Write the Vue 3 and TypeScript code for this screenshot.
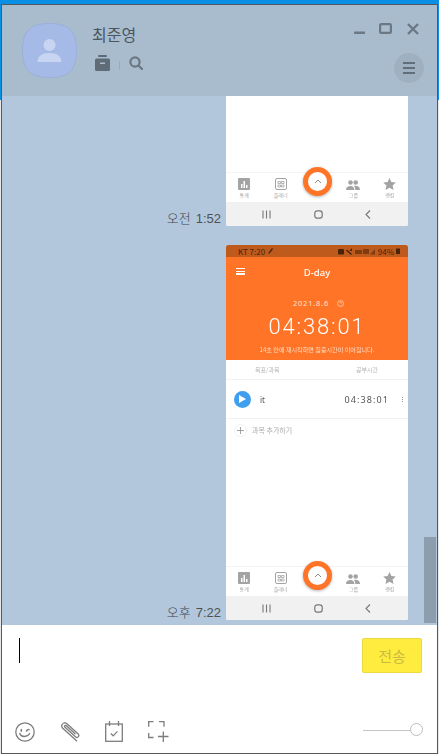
<template>
  <div class="desktop">
    <div class="window">
      <header class="head">
        <div class="avatar">
          <svg width="55" height="55" viewBox="0 0 55 55">
            <path class="avatar-shape" d="M27.5 .5C47 .5 54.500 8 54.500 27.500S47 54.500 27.500 54.500 .5 47 .5 27.500 8 .5 27.500 .5Z" />
            <circle cx="27.500" cy="22" r="6" fill="#c8d5f2" />
            <path d="M15.500 39c0-6 5-9 12-9s12 3 12 9Z" fill="#c8d5f2" />
          </svg>
        </div>
        <div class="info">
          <div class="name">{{ name }}</div>
          <div class="tools">
            <svg width="15" height="16" viewBox="0 0 15 16">
              <rect x="3" y="0" width="9" height="2" rx="1" fill="#5f6b76" />
              <path d="M1.500 3.500h12A1.500 1.500 0 0 1 15 5v9.500a1.500 1.500 0 0 1-1.500 1.500h-12A1.500 1.500 0 0 1 0 14.500V5a1.500 1.500 0 0 1 1.500-1.500Z" fill="#5f6b76" />
              <rect x="5" y="7.500" width="5" height="1.500" fill="#a9bccd" />
            </svg>
            <span class="sep"></span>
            <svg width="14" height="14" viewBox="0 0 14 14" fill="none" stroke="#6b7782" stroke-width="2.200">
              <circle cx="6" cy="6" r="4.600" />
              <path d="M9.500 9.500 13 13" stroke-linecap="round" />
            </svg>
          </div>
        </div>
        <div class="side">
          <div class="controls">
            <svg width="12" height="12" viewBox="0 0 12 12"><rect x="0" y="8.500" width="11" height="2.500" rx=".5" fill="#6c7985" /></svg>
            <svg width="13" height="12" viewBox="0 0 13 12" fill="none" stroke="#6c7985" stroke-width="2.200"><rect x="1.100" y="1.100" width="10.800" height="8.800" rx="1" /></svg>
            <svg width="12" height="12" viewBox="0 0 12 12" fill="none" stroke="#6c7985" stroke-width="2.400"><path d="M1 1l10 10M11 1 1 11" /></svg>
          </div>
          <button class="menu" type="button" aria-label="menu">
            <span></span><span></span><span></span>
          </button>
        </div>
      </header>

      <section class="chat">
        <div v-for="msg in messages" :key="msg.time" class="msg">
          <div class="time"><span class="ampm">{{ msg.ampm }}</span>{{ msg.time }}</div>
          <div class="phone" :class="{ 'phone--full': msg.full, 'phone--cut': !msg.full }">
            <template v-if="msg.full">
              <div class="status">
                <span>KT 7:20</span>
                <svg width="5" height="6" viewBox="0 0 5 6"><path d="M0 6l1-2 3-4 1 1-3 4Z" fill="#4a2408" /></svg>
                <span class="status-right">
                  <svg width="38" height="7" viewBox="0 0 38 7" fill="#4a2408">
                    <rect x="0" y="1" width="6" height="5.500" rx="1" />
                    <path d="M9 1.500l5 4.500-1 1-5-4.500ZM14 0v3h-2.500Z" />
                    <rect x="17" y="2" width="7" height="4" opacity=".55" />
                    <rect x="25" y="1" width="6" height="5" opacity=".55" />
                    <path d="M32 6.500l5-5.500v5.500Z" opacity=".55" />
                  </svg>
                  <span>94%</span>
                  <svg width="4" height="6" viewBox="0 0 4 6"><rect y=".5" width="4" height="5.500" fill="#4a2408" /></svg>
                </span>
              </div>
              <div class="orange">
                <div class="bar">
                  <span class="burger"><i></i><i></i><i></i></span>
                  <span class="title">D-day</span>
                </div>
                <div class="date">
                  <span>2021.8.6</span>
                  <svg width="7" height="7" viewBox="0 0 7 7" fill="none" stroke="#ffd9bf" stroke-width=".7"><circle cx="3.500" cy="3.500" r="3" /><path d="M2.600 2.800c0-1.200 1.800-1.200 1.800 0 0 .7-.9.7-.9 1.400M3.500 5v.5" /></svg>
                </div>
                <div class="clock">04:38:01</div>
                <div class="notice">14초 안에 재시작하면 집중시간이 이어집니다.</div>
              </div>
              <div class="thead"><span>목표/과목</span><span>공부시간</span></div>
              <div class="subject">
                <span class="play"><svg width="7" height="8" viewBox="0 0 7 8"><path d="M0 0l7 4-7 4Z" fill="#fff" /></svg></span>
                <span class="subject-name">it</span>
                <span class="subject-time">04:38:01</span>
                <span class="dots"><i></i><i></i><i></i></span>
              </div>
              <div class="add">
                <span class="plus"><svg width="7" height="7" viewBox="0 0 7 7"><path d="M3.500 0v7M0 3.500h7" stroke="#9a9a9a" stroke-width=".9" /></svg></span>
                <span>과목 추가하기</span>
              </div>
            </template>
            <div class="spacer"></div>
            <nav class="tabs">
              <div class="tab">
                <svg width="12" height="12" viewBox="0 0 12 12"><rect width="12" height="12" rx="1" fill="#a3a3a3" /><path d="M3 6h1.500v4H3Zm2.500-3H7v7H5.500ZM8 7h1.500v3H8Z" fill="#fff" /></svg>
                <span>통계</span>
              </div>
              <div class="tab">
                <svg width="12" height="12" viewBox="0 0 12 12" fill="none" stroke="#a3a3a3"><rect x=".5" y=".5" width="11" height="11" rx="1.500" /><path d="M3 3.500h2.500v2H3Zm3.500 0H9v2H6.500ZM3 7h2.500v2H3Zm3.500 0H9v2H6.500Z" stroke-width=".8" /></svg>
                <span>플래너</span>
              </div>
              <div class="tab"></div>
              <div class="tab">
                <svg width="14" height="10" viewBox="0 0 14 10" fill="#a3a3a3"><circle cx="4.500" cy="2.500" r="2.300" /><circle cx="9.700" cy="2.500" r="2.300" /><path d="M0 10c0-3 2-4 4.500-4S8 7 8.400 10Zm9.300 0C9.200 8 8.700 6.700 8 6c3-.6 6 .5 6 4Z" /></svg>
                <span>그룹</span>
              </div>
              <div class="tab">
                <svg width="13" height="12" viewBox="0 0 13 12"><path d="M6.500 0l1.900 4 4.400.5-3.200 3 .9 4.400-4-2.200-4 2.200.9-4.400L.2 4.500 4.600 4Z" fill="#a3a3a3" /></svg>
                <span>랭킹</span>
              </div>
              <span class="fab"><svg width="8" height="5" viewBox="0 0 8 5" fill="none" stroke="#8a8a8a" stroke-width="1"><path d="M1 4l3-3 3 3" /></svg></span>
            </nav>
            <div class="nav">
              <svg width="9" height="9" viewBox="0 0 9 9" stroke="#777" stroke-width="1.100"><path d="M1 .5v8M4.500 .5v8M8 .5v8" /></svg>
              <svg width="9" height="9" viewBox="0 0 9 9" fill="none" stroke="#777" stroke-width="1.200"><rect x=".8" y=".8" width="7.400" height="7.400" rx="2.400" /></svg>
              <svg width="6" height="9" viewBox="0 0 6 9" fill="none" stroke="#777" stroke-width="1.100"><path d="M5 .5 1 4.500l4 4" /></svg>
            </div>
          </div>
        </div>
        <div class="scroll"></div>
      </section>

      <footer class="composer">
        <div class="compose-top">
          <span class="caret"></span>
          <button class="send" type="button">전송</button>
        </div>
        <div class="compose-bottom">
          <svg width="20" height="20" viewBox="0 0 20 20" fill="none" stroke="#7d7d7d" stroke-width="1.300">
            <circle cx="10" cy="10" r="9.200" />
            <path d="M4.800 11.500c1 3.800 7.400 4.200 9.800 0" stroke-linecap="round" />
            <path d="M6.300 7.500v1.800M11.500 9c.6-1 1.800-1.600 2.500-1.400" stroke-linecap="round" stroke-width="1.500" />
          </svg>
          <svg width="20" height="20" viewBox="0 0 20 20" fill="none" stroke="#7d7d7d" stroke-width="1.300">
            <path d="M16.500 18.700 2.500 6C.8 4 2 1.600 4 1c1.200-.3 2.200.1 3.200 1l11 10c1.700 1.800-.6 4.400-2.500 3L4.800 5.100c-.9-1 .4-2.300 1.300-1.500l9 8.200" stroke-linecap="round" />
          </svg>
          <svg width="18" height="21" viewBox="0 0 18 21" fill="none" stroke="#7d7d7d" stroke-width="1.300">
            <rect x=".7" y="3" width="16.600" height="17.300" />
            <path d="M4.500 0v5M13.500 0v5" />
            <path d="M5.800 12.500l2.400 2.300 4.200-4.500" stroke-width="1.200" />
          </svg>
          <svg width="21" height="21" viewBox="0 0 21 21" fill="none" stroke="#7d7d7d" stroke-width="1.300">
            <path d="M5.500 .7H.7v5M11 .7h5v5M.7 12v4.500h4.800M10 15.500h10.500M15.300 10.500v10.500" />
          </svg>
          <div class="slider"><span class="knob"></span></div>
        </div>
      </footer>
    </div>
  </div>
</template>

<script setup lang="ts">
interface Message {
  ampm: string
  time: string
  full: boolean
}

const name = '최준영'

const messages: Message[] = [
  { ampm: '오전', time: '1:52', full: false },
  { ampm: '오후', time: '7:22', full: true },
]
</script>

<style>
html,
body {
  margin: 0;
  overflow: hidden;
}
</style>

<style scoped>
.desktop {
  box-sizing: border-box;
  width: 439px;
  height: 754px;
  padding: 4px 1px 0 1px;
  background: linear-gradient(to bottom, #0a8fe6 0, #0a8fe6 100px, #e8e8e8 100px);
  font-family: 'Noto Sans CJK KR', 'Noto Sans', sans-serif;
}

.window {
  box-sizing: border-box;
  display: flex;
  flex-direction: column;
  height: 750px;
  border: 1px solid #56595c;
  background: #fff;
}

.head {
  display: flex;
  flex: none;
  height: 91px;
  background: #a9bccd;
}

.avatar {
  margin: 18px 0 0 20px;
  width: 55px;
  height: 55px;
}

.avatar-shape {
  fill: #a6bae8;
  stroke: #9bb0d8;
}

.info {
  margin-left: 15px;
  padding-top: 17px;
}

.name {
  font-size: 16px;
  line-height: 24px;
  color: #4b5661;
}

.tools {
  display: flex;
  align-items: center;
  gap: 9px;
  margin: 9px 0 0 3px;
}

.sep {
  width: 1px;
  height: 9px;
  background: #98abbb;
  margin-top: 4px;
}

.side {
  display: flex;
  flex-direction: column;
  align-items: flex-end;
  margin-left: auto;
  padding: 18px 13px 0 0;
}

.controls {
  display: flex;
  gap: 14px;
  margin-right: 5px;
}

.controls svg:nth-child(2) {
  margin-left: -1px;
  margin-right: 1px;
}

.menu {
  display: flex;
  flex-direction: column;
  align-items: center;
  justify-content: center;
  gap: 3px;
  width: 30px;
  height: 30px;
  margin-top: 18px;
  padding: 0;
  border: 0;
  border-radius: 50%;
  background: #9fb1c1;
}

.menu span {
  width: 12px;
  height: 2px;
  background: #626e7a;
}

.chat {
  position: relative;
  display: flex;
  flex: 1;
  flex-direction: column;
  justify-content: flex-end;
  gap: 19px;
  min-height: 0;
  overflow: hidden;
  padding-bottom: 5px;
  background: #b2c7dc;
}

.msg {
  display: flex;
  flex: none;
  align-items: flex-end;
  justify-content: flex-end;
  gap: 5px;
  padding-right: 29px;
}

.time {
  margin-bottom: -2px;
  font-size: 13px;
  line-height: 19px;
  color: #4f5350;
  font-family: 'Liberation Sans', 'Noto Sans CJK KR', sans-serif;
}

.ampm {
  margin-right: 5px;
  color: #3e4650;
  font-family: 'Noto Sans CJK KR', sans-serif;
  font-weight: 300;
}

.phone {
  position: relative;
  display: flex;
  flex-direction: column;
  box-sizing: border-box;
  width: 182px;
  overflow: hidden;
  border-radius: 2px;
  background: #fff;
  filter: blur(0.45px);
}

.phone--cut {
  height: 260px;
}

.phone--full {
  height: 375px;
}

.status {
  display: flex;
  flex: none;
  align-items: center;
  gap: 3px;
  height: 12px;
  padding: 0 8px 0 12px;
  background: #bf5a1d;
  font-size: 8px;
  color: #4a2408;
}

.status-right {
  display: flex;
  align-items: center;
  gap: 2px;
  margin-left: auto;
}

.orange {
  display: flex;
  flex: none;
  flex-direction: column;
  align-items: center;
  height: 103px;
  background: #ff7426;
  color: #fff;
}

.bar {
  position: relative;
  width: 100%;
  padding-top: 9px;
  text-align: center;
  font-family: 'Noto Sans', sans-serif;
}

.title {
  display: block;
  font-size: 9.500px;
  line-height: 14px;
  font-weight: 500;
}

.burger {
  position: absolute;
  left: 10px;
  top: 11px;
  display: flex;
  flex-direction: column;
  gap: 1.500px;
}

.burger i {
  width: 9px;
  height: 1.200px;
  background: #fff;
}

.date {
  display: flex;
  align-items: center;
  gap: 8px;
  margin: 17px 0 0 3px;
  font-family: 'Noto Sans', sans-serif;
  font-size: 7.500px;
  line-height: 12px;
  letter-spacing: 0.800px;
  color: #ffe3cf;
}

.clock {
  margin-top: 4px;
  font-family: Roboto, 'Noto Sans', sans-serif;
  font-size: 22px;
  font-weight: 300;
  line-height: 28px;
  letter-spacing: 1.800px;
}

.notice {
  margin-top: 4px;
  font-size: 6.100px;
  line-height: 10px;
  color: #ffdcc4;
}

.thead {
  display: flex;
  flex: none;
  align-items: center;
  justify-content: space-between;
  height: 19px;
  padding: 0 30px 0 29px;
  border-bottom: 1px solid #f2f2f2;
  font-size: 6px;
  color: #b4b4b4;
}

.subject {
  display: flex;
  flex: none;
  align-items: center;
  height: 38px;
  padding: 0 5px 0 8px;
  border-bottom: 1px solid #f2f2f2;
  font-family: 'Noto Sans', sans-serif;
  color: #555;
}

.play {
  display: flex;
  align-items: center;
  justify-content: center;
  width: 17px;
  height: 17px;
  border-radius: 50%;
  background: #3f9fee;
}

.subject-name {
  margin-left: 9px;
  font-size: 8px;
}

.subject-time {
  margin-left: auto;
  font-size: 9px;
  letter-spacing: 1.100px;
}

.dots {
  display: flex;
  flex-direction: column;
  gap: 1px;
  margin-left: 13px;
}

.dots i {
  width: 1px;
  height: 1px;
  background: #999;
}

.add {
  display: flex;
  flex: none;
  align-items: center;
  gap: 5px;
  height: 22px;
  padding-left: 8px;
  font-size: 7px;
  color: #adadad;
}

.plus {
  display: flex;
  align-items: center;
  justify-content: center;
  width: 13px;
  height: 13px;
  border: 1px solid #f0f0f0;
  border-radius: 50%;
  box-sizing: border-box;
}

.spacer {
  flex: 1;
}

.tabs {
  position: relative;
  display: grid;
  flex: none;
  grid-template-columns: repeat(5, 1fr);
  height: 30px;
  box-sizing: border-box;
  border-top: 1px solid #f4f4f4;
}

.tab {
  display: flex;
  flex-direction: column;
  align-items: center;
  justify-content: flex-end;
  gap: 2px;
  padding-bottom: 5px;
  height: 25px;
  font-size: 5px;
  line-height: 6px;
  color: #a5a5a5;
}

.fab {
  position: absolute;
  left: 77px;
  top: -6px;
  box-sizing: border-box;
  display: flex;
  align-items: center;
  justify-content: center;
  width: 29px;
  height: 29px;
  border: 5px solid #ff7426;
  border-radius: 50%;
  background: #fff;
  box-shadow: 0 1px 3px rgba(0, 0, 0, 0.3);
}

.nav {
  display: flex;
  flex: none;
  align-items: center;
  justify-content: space-between;
  height: 24px;
  padding: 0 37px 0 36px;
  background: #f1f1f1;
}

.scroll {
  position: absolute;
  right: 1px;
  bottom: 2px;
  width: 12px;
  height: 86px;
  background: #8c9dae;
}

.composer {
  display: flex;
  flex: none;
  flex-direction: column;
  height: 128px;
  box-sizing: border-box;
  padding: 13px 14px 11px 13px;
  background: #fff;
}

.compose-top {
  display: flex;
  justify-content: space-between;
  align-items: flex-start;
  flex: 1;
  padding: 0 1px 0 4px;
}

.caret {
  width: 1px;
  height: 25px;
  background: #000;
}

.send {
  width: 60px;
  height: 35px;
  padding: 0;
  border: 1px solid #ecd93f;
  border-radius: 2px;
  background: #ffec3e;
  font-family: 'Noto Sans CJK KR', sans-serif;
  font-size: 15px;
  color: #c9bb42;
}

.compose-bottom {
  display: flex;
  align-items: center;
  gap: 25px;
}

.slider {
  position: relative;
  width: 53px;
  height: 1px;
  margin: -3px 7px 0 auto;
  background: #c4c4c4;
}

.knob {
  position: absolute;
  right: -7px;
  top: -7px;
  box-sizing: border-box;
  width: 13px;
  height: 13px;
  border: 1px solid #bdbdbd;
  border-radius: 50%;
  background: #fff;
}
</style>
